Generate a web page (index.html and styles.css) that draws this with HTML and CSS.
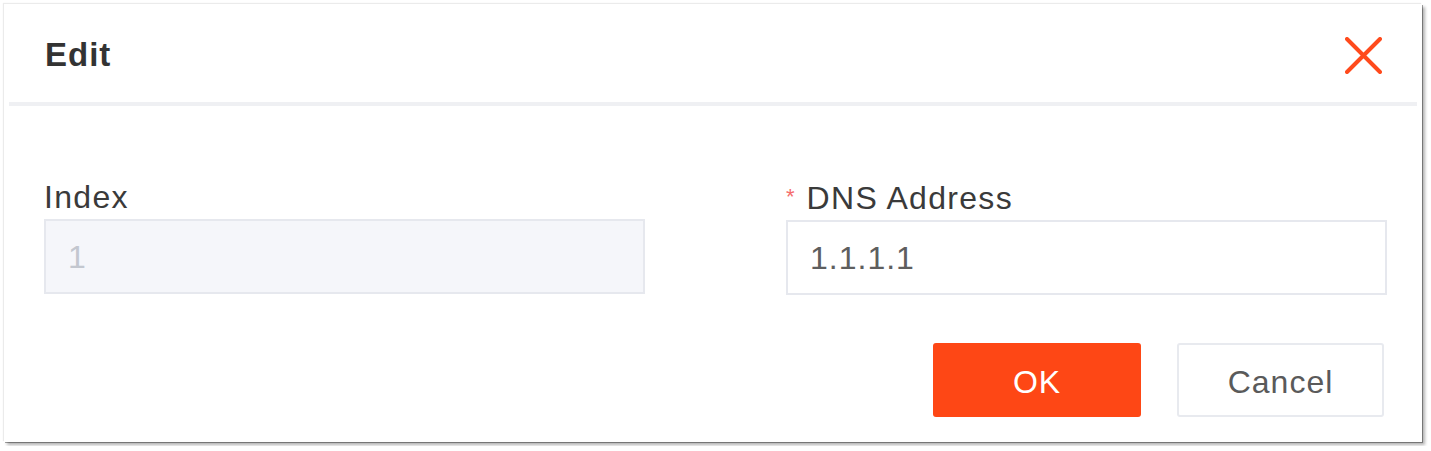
FILE: index.html
```html
<!DOCTYPE html>
<html lang="en">
<head>
<meta charset="utf-8">
<title>Edit</title>
<link rel="stylesheet" href="styles.css">
</head>
<body>
<div class="dialog">
  <div class="dialog-header">
    <h1 class="dialog-title">Edit</h1>
    <button class="close-btn" aria-label="Close">
      <svg width="37" height="37" viewBox="0 0 37 37">
        <path d="M2 2 L35 35 M35 2 L2 35" stroke="#ff4a1c" stroke-width="4" stroke-linecap="round" fill="none"/>
      </svg>
    </button>
  </div>
  <div class="divider"></div>
  <div class="dialog-body">
    <div class="form-grid">
      <div class="field">
        <label class="field-label">Index</label>
        <div class="input input-disabled">1</div>
      </div>
      <div class="field">
        <label class="field-label"><span class="required">*</span>DNS Address</label>
        <div class="input">1.1.1.1</div>
      </div>
    </div>
    <div class="actions">
      <button class="btn btn-primary">OK</button>
      <button class="btn btn-default">Cancel</button>
    </div>
  </div>
</div>
</body>
</html>
```

FILE: styles.css
```css
html, body {
  margin: 0;
  padding: 0;
  background: #ffffff;
}

body {
  font-family: "Liberation Sans", Arial, sans-serif;
  padding: 4px;
}

.dialog {
  width: 1418px;
  height: 438px;
  box-sizing: border-box;
  background: #ffffff;
  box-shadow: -1px -1px 1px rgba(0, 0, 0, 0.08), 1px 1px 0 rgba(0, 0, 0, 0.35), 3px 3px 3px rgba(0, 0, 0, 0.3);
  display: flex;
  flex-direction: column;
}

.dialog-header {
  height: 100px;
  display: flex;
  align-items: center;
  justify-content: space-between;
  padding: 0 40px 0 41px;
}

.dialog-title {
  margin: 4px 0 0 0;
  font-size: 33px;
  font-weight: bold;
  letter-spacing: 1px;
  color: #333333;
  line-height: 36px;
}

.close-btn {
  border: 0;
  background: none;
  padding: 0;
  width: 37px;
  height: 37px;
  display: block;
  margin-top: 4px;
}

.close-btn svg {
  display: block;
}

.divider {
  height: 4px;
  background: #eff0f3;
  margin: 0 5px;
}

.dialog-body {
  padding: 72px 35px 25px 40px;
  display: flex;
  flex-direction: column;
}

.form-grid {
  display: grid;
  grid-template-columns: 601px 601px;
  justify-content: space-between;
}

.field {
  display: flex;
  flex-direction: column;
  gap: 4px;
}

.field-label {
  font-size: 32px;
  line-height: 36px;
  padding-top: 1px;
  letter-spacing: 1.3px;
  color: #3a3a3a;
}

.required {
  font-size: 22px;
  color: #f56c6c;
  vertical-align: 5px;
  margin-right: 12px;
  letter-spacing: 0;
}

.input {
  height: 75px;
  box-sizing: border-box;
  border: 2px solid #e6e8ee;
  background: #ffffff;
  display: flex;
  align-items: center;
  padding-left: 22px;
  padding-top: 2px;
  font-size: 32px;
  letter-spacing: 1px;
  color: #5e5e5e;
}

.input-disabled {
  background: #f5f6fa;
  color: #c3c7cf;
}

.actions {
  display: flex;
  justify-content: flex-end;
  gap: 36px;
  margin-top: 48px;
  margin-right: 3px;
}

.btn {
  height: 74px;
  box-sizing: border-box;
  font-family: "Liberation Sans", Arial, sans-serif;
  font-size: 32px;
  letter-spacing: 1px;
  border-radius: 3px;
  padding-top: 5px;
  cursor: pointer;
}

.btn-primary {
  width: 208px;
  background: #fe4715;
  border: 0;
  color: #ffffff;
}

.btn-default {
  width: 207px;
  background: #ffffff;
  border: 2px solid #e8eaef;
  color: #5a5a5a;
}
```
